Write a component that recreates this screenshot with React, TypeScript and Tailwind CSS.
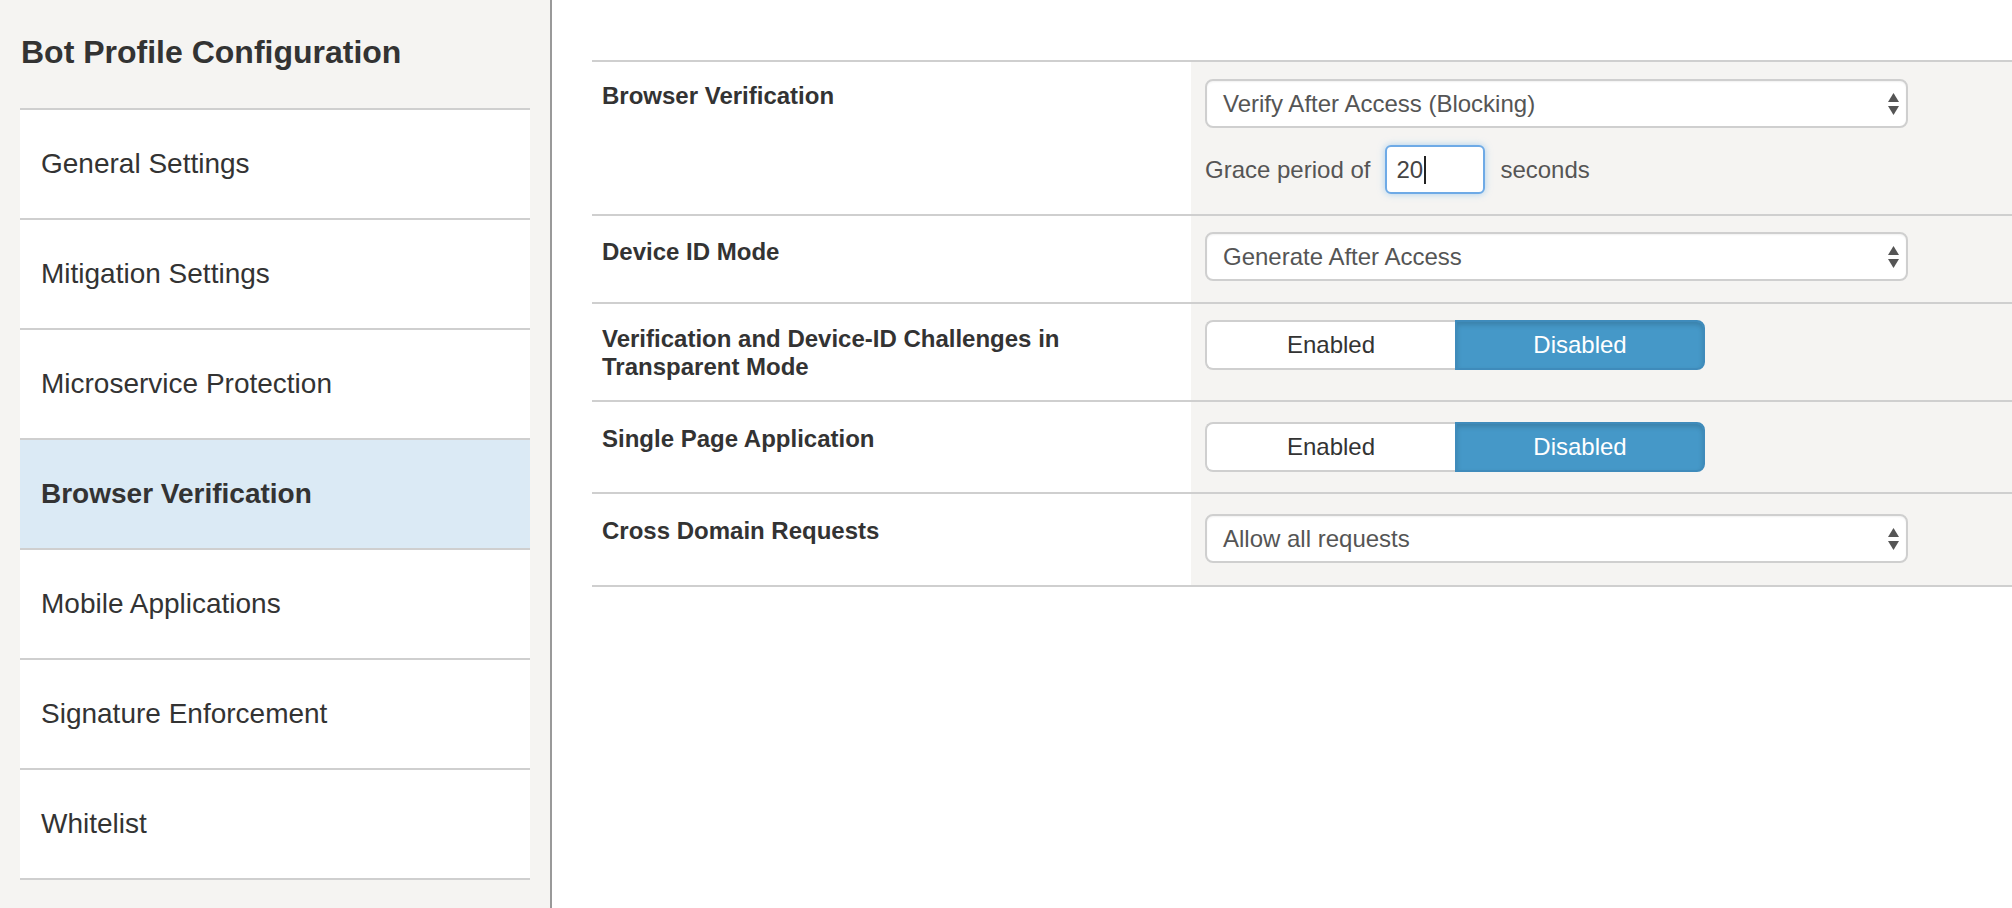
import React from 'react';

const navItems = [
    'General Settings',
    'Mitigation Settings',
    'Microservice Protection',
    'Browser Verification',
    'Mobile Applications',
    'Signature Enforcement',
    'Whitelist',
];

const FONT = "font-['Liberation_Sans',Arial,Helvetica,sans-serif]";

// Fake native select with the mac up/down arrows
const SelectBox: React.FC<{ value: string }> = ({ value }) => (
    <div className="flex h-[49px] w-[703px] items-center justify-between rounded-[8px] border-2 border-[#cfcfcf] bg-white pl-[16px] pr-[7px] text-[24px] text-[#555] shadow-[inset_0_1px_2px_rgba(0,0,0,0.06)]">
        <span>{value}</span>
        <svg width="11" height="22" viewBox="0 0 11 22" className="text-[#555]">
            <polygon points="5.5,0 11,9 0,9" fill="currentColor" />
            <polygon points="0,13 11,13 5.5,22" fill="currentColor" />
        </svg>
    </div>
);

const Toggle: React.FC = () => (
    <div className="flex h-[50px] w-[500px] text-[24px]">
        <div className="flex w-[250px] items-center justify-center rounded-l-[8px] border-2 border-r-0 border-[#cfcfcf] bg-white text-[#333]">
            Enabled
        </div>
        <div className="flex w-[250px] items-center justify-center rounded-r-[8px] border-2 border-[#3f8bbb] bg-[#4598c8] text-white shadow-[inset_0_3px_5px_rgba(0,0,0,0.15)]">
            Disabled
        </div>
    </div>
);

type RowProps = {
    label: React.ReactNode;
    labelPad: string;
    ctrlPad: string;
    last?: boolean;
    children: React.ReactNode;
};

const Row: React.FC<RowProps> = ({ label, labelPad, ctrlPad, last, children }) => (
    <div className={`flex border-t-2 border-[#cfcfcf] ${last ? 'border-b-2' : ''}`}>
        <div className={`w-[599px] shrink-0 pl-[10px] text-[24px] leading-[28px] font-bold text-[#333] ${labelPad}`}>
            {label}
        </div>
        <div className={`flex-1 bg-[#f5f4f2] pl-[14px] ${ctrlPad}`}>{children}</div>
    </div>
);

const App: React.FC = () => {
    const active = 'Browser Verification';

    return (
        <div className={`flex h-[908px] w-full overflow-hidden bg-white ${FONT}`}>
            {/* Sidebar */}
            <div className="w-[552px] shrink-0 border-r-2 border-[#999] bg-[#f5f4f2] px-[20px]">
                <h1 className="mt-[34px] mb-[37px] pl-[1px] text-[32px] leading-[37px] font-bold text-[#333]">
                    Bot Profile Configuration
                </h1>
                <div className="border-b-2 border-[#cfcfcf]">
                    {navItems.map((item) => (
                        <div
                            key={item}
                            className={`flex h-[110px] items-center border-t-2 border-[#cfcfcf] pl-[21px] text-[28px] text-[#333] ${
                                item === active ? 'bg-[#dbeaf5] font-bold' : 'bg-white'
                            }`}
                        >
                            {item}
                        </div>
                    ))}
                </div>
            </div>

            {/* Main */}
            <div className="flex-1 pt-[60px] pl-[40px]">
                <Row label="Browser Verification" labelPad="pt-[20px]" ctrlPad="pt-[17px] pb-[20px]">
                    <SelectBox value="Verify After Access (Blocking)" />
                    <div className="mt-[17px] flex items-center text-[24px] text-[#555]">
                        <span>Grace period of</span>
                        <div className="mx-[15px] flex h-[49px] w-[100px] items-center rounded-[6px] border-2 border-[#6eaae6] bg-white pl-[9px] text-[#444] shadow-[0_0_7px_rgba(102,175,233,0.55)]">
                            20
                            <span className="ml-[1px] inline-block h-[28px] w-[2px] bg-[#222]" />
                        </div>
                        <span>seconds</span>
                    </div>
                </Row>
                <Row label="Device ID Mode" labelPad="pt-[22px]" ctrlPad="pt-[16px] pb-[21px]">
                    <SelectBox value="Generate After Access" />
                </Row>
                <Row
                    label={
                        <>
                            Verification and Device-ID Challenges in
                            <br />
                            Transparent Mode
                        </>
                    }
                    labelPad="pt-[21px]"
                    ctrlPad="pt-[16px] pb-[30px]"
                >
                    <Toggle />
                </Row>
                <Row label="Single Page Application" labelPad="pt-[23px]" ctrlPad="pt-[20px] pb-[20px]">
                    <Toggle />
                </Row>
                <Row label="Cross Domain Requests" labelPad="pt-[23px]" ctrlPad="pt-[20px] pb-[22px]" last>
                    <SelectBox value="Allow all requests" />
                </Row>
            </div>
        </div>
    );
};

export default App;
